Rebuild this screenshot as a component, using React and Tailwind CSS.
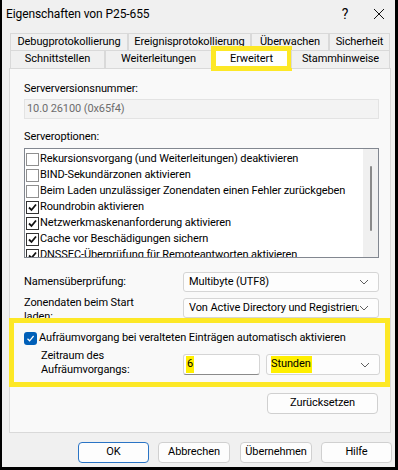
const options = [
    { label: "Rekursionsvorgang (und Weiterleitungen) deaktivieren", checked: false },
    { label: "BIND-Sekundärzonen aktivieren", checked: false },
    { label: "Beim Laden unzulässiger Zonendaten einen Fehler zurückgeben", checked: false },
    { label: "Roundrobin aktivieren", checked: true },
    { label: "Netzwerkmaskenanforderung aktivieren", checked: true },
    { label: "Cache vor Beschädigungen sichern", checked: true },
    { label: "DNSSEC-Überprüfung für Remoteantworten aktivieren", checked: true },
];

const Chevron = () => (
    <svg width="10" height="6" viewBox="0 0 10 6" className="shrink-0">
        <path d="M1 1 L5 5 L9 1" fill="none" stroke="#5f5f5f" strokeWidth="1" />
    </svg>
);

const Combo = ({ children, className = "" }) => (
    <div
        className={`h-[20px] min-w-0 flex items-center justify-between pl-[5px] pr-[9px] bg-[#fdfdfd] border border-[#d5d5d5] rounded-[3px] ${className}`}
    >
        <span className="whitespace-nowrap overflow-hidden">{children}</span>
        <Chevron />
    </div>
);

const ClassicBox = ({ checked }) => (
    <span
        className={`w-[13px] h-[13px] shrink-0 bg-white border flex items-center justify-center ${
            checked ? "border-[#333333]" : "border-[#8f8f8f]"
        }`}
    >
        {checked && (
            <svg width="9" height="9" viewBox="0 0 9 9">
                <path d="M1 4.5 L3.5 7 L8 1.5" fill="none" stroke="#111" strokeWidth="1.8" />
            </svg>
        )}
    </span>
);

const Tab = ({ label, width, active }) => (
    <div
        className={`relative h-full shrink-0 flex items-center justify-center border-t border-l border-r border-[#d9d9d9] ${
            active ? "bg-white" : "bg-[#f0f0f0]"
        }`}
        style={{ width }}
    >
        {label}
        {active && (
            <span className="absolute left-[-2px] right-[-2px] top-[-5px] bottom-[-3px] border-[5px] border-[#fde826]" />
        )}
    </div>
);

const Button = ({ children, primary, className = "" }) => (
    <div
        className={`h-[21px] shrink-0 flex items-center justify-center bg-[#fdfdfd] rounded-[4px] border ${
            primary ? "border-[#2a74c5]" : "border-[#d0d0d0]"
        } ${className}`}
    >
        {children}
    </div>
);

export default function App() {
    return (
        <div className="w-[398px] h-[470px] bg-[#f0f0f0] border-l-2 border-r-[3px] border-b-[3px] border-black flex flex-col text-[11px] tracking-[-0.1px] text-black font-['Roboto','Liberation_Sans',sans-serif] overflow-hidden">
            {/* title bar */}
            <div className="h-[28px] shrink-0 flex items-center pl-[4px] text-[12px]">
                <span className="flex-1">Eigenschaften von P25-655</span>
                <span className="w-[30px] text-center text-[14px] mr-[13px]">?</span>
                <svg width="12" height="12" viewBox="0 0 12 12" className="mr-[10px]">
                    <path d="M1 1 L11 11 M11 1 L1 11" stroke="#111" strokeWidth="1" />
                </svg>
            </div>

            {/* tabs */}
            <div className="mt-[5px] ml-[8px] flex h-[17px]">
                <Tab label="Debugprotokollierung" width={118} />
                <Tab label="Ereignisprotokollierung" width={123} />
                <Tab label="Überwachen" width={78} />
                <Tab label="Sicherheit" width={61} />
            </div>
            <div className="ml-[8px] flex h-[18px]">
                <Tab label="Schnittstellen" width={95} />
                <Tab label="Weiterleitungen" width={107} />
                <Tab label="Erweitert" width={79} active />
                <Tab label="Stammhinweise" width={99} />
            </div>

            {/* panel */}
            <div className="ml-[7px] w-[382px] h-[365px] bg-[#f9f9f9] border border-[#d9d9d9] pl-[14px] pr-[11px] pt-[12px] flex flex-col">
                <div className="h-[16px] leading-[16px]">Serverversionsnummer:</div>
                <div className="mt-[2px] h-[20px] flex items-center pl-[2px] bg-[#f3f3f3] border border-[#e3e3e3] text-[#6d6d6d]">
                    10.0 26100 (0x65f4)
                </div>
                <div className="mt-[10px] h-[16px] leading-[16px]">Serveroptionen:</div>
                <div className="mt-[3px] h-[110px] bg-white border border-[#828790] flex overflow-hidden">
                    <div className="flex-1 min-w-0 pl-[1px] pt-[2px]">
                        {options.map((o) => (
                            <div key={o.label} className="h-[16px] flex items-center gap-[1px] whitespace-nowrap">
                                <ClassicBox checked={o.checked} />
                                <span>{o.label}</span>
                            </div>
                        ))}
                    </div>
                    <div className="w-[15px] shrink-0 bg-[#f0f0f0] flex justify-center pt-[17px]">
                        <span className="w-[2px] h-[65px] bg-[#8a8a8a] rounded-full" />
                    </div>
                </div>

                <div className="mt-[14px] flex items-center h-[20px]">
                    <span className="w-[159px] shrink-0">Namensüberprüfung:</span>
                    <Combo className="flex-1">Multibyte (UTF8)</Combo>
                </div>
                <div className="mt-[6px] flex items-center h-[20px]">
                    <span className="w-[159px] shrink-0 leading-[14px] mt-[3px]">
                        Zonendaten beim Start
                        <br />
                        laden:
                    </span>
                    <Combo className="flex-1">Von Active Directory und Registrierur</Combo>
                </div>

                {/* highlighted scavenging box */}
                <div className="ml-[-15px] w-[381px] h-[69px] shrink-0 border-[5px] border-[#fde826] pl-[10px] pr-[5px] pt-[8px]">
                    <div className="flex items-center gap-[2px] h-[14px]">
                        <span className="w-[13px] h-[13px] shrink-0 rounded-[3px] bg-[#005fb8] flex items-center justify-center">
                            <svg width="9" height="9" viewBox="0 0 9 9">
                                <path d="M1.5 4.8 L3.6 6.8 L7.6 2" fill="none" stroke="#fff" strokeWidth="1.2" />
                            </svg>
                        </span>
                        <span className="whitespace-nowrap">
                            Aufräumvorgang bei veralteten Einträgen automatisch aktivieren
                        </span>
                    </div>
                    <div className="mt-[4px] flex items-start">
                        <span className="w-[159px] shrink-0 pl-[17px] leading-[14px]">
                            Zeitraum des
                            <br />
                            Aufräumvorgangs:
                        </span>
                        <div className="mt-[5px] w-[77px] h-[21px] shrink-0 flex items-center pl-[2px] bg-white border border-[#d5d5d5] border-b-[#8a8a8a] rounded-[3px]">
                            <span className="bg-[#ffef00] px-[1px]">6</span>
                        </div>
                        <div className="mt-[5px] ml-[6px] w-[114px] h-[21px] shrink-0 flex items-center justify-between pl-[4px] pr-[9px] bg-[#fdfdfd] border border-[#d5d5d5] rounded-[3px]">
                            <span className="bg-[#ffef00] pr-[1px]">Stunden</span>
                            <Chevron />
                        </div>
                    </div>
                </div>

                <div className="mt-[6px] flex justify-end pr-[1px]">
                    <Button className="w-[111px]">Zurücksetzen</Button>
                </div>
            </div>

            {/* footer buttons */}
            <div className="mt-[9px] flex pl-[76px] gap-[9px]">
                <Button primary className="w-[71px]">OK</Button>
                <Button className="w-[72px]">Abbrechen</Button>
                <Button className="w-[72px] ml-[1px]">Übernehmen</Button>
                <Button className="w-[71px]">Hilfe</Button>
            </div>
        </div>
    );
}
